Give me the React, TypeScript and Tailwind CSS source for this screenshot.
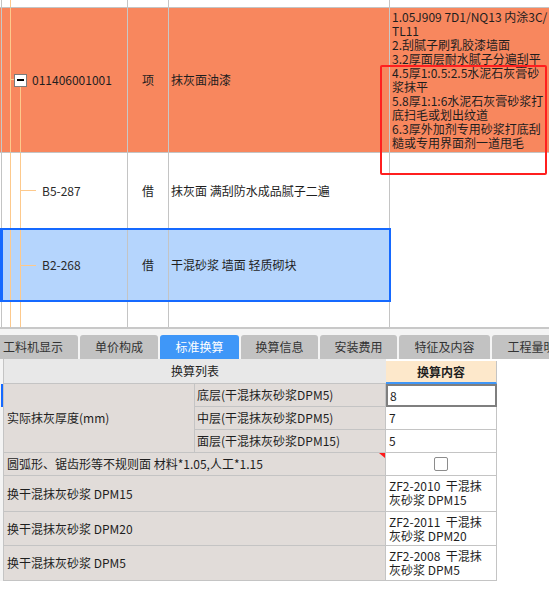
import React from 'react';

const descLines = [
  '1.05J909 7D1/NQ13 内涂3C/',
  'TL11',
  '2.刮腻子刷乳胶漆墙面',
  '3.2厚面层耐水腻子分遍刮平',
  '4.5厚1:0.5:2.5水泥石灰膏砂',
  '浆抹平',
  '5.8厚1:1:6水泥石灰膏砂浆打',
  '底扫毛或划出纹道',
  '6.3厚外加剂专用砂浆打底刮',
  '糙或专用界面剂一道甩毛',
];

const tabs = [
  { label: '工料机显示', w: 'w-[90px]' },
  { label: '单价构成', w: 'w-[78px]' },
  { label: '标准换算', w: 'w-[79px]', active: true },
  { label: '换算信息', w: 'w-[77px]' },
  { label: '安装费用', w: 'w-[77px]' },
  { label: '特征及内容', w: 'w-[91px]' },
  { label: '工程量明细', w: 'w-[91px]' },
];

const layers = [
  { label: '底层(干混抹灰砂浆DPM5)', value: '8' },
  { label: '中层(干混抹灰砂浆DPM5)', value: '7' },
  { label: '面层(干混抹灰砂浆DPM15)', value: '5' },
];

const swaps = [
  { label: '换干混抹灰砂浆 DPM15', code: 'ZF2-2010\u00a0\u00a0干混抹', name: '灰砂浆 DPM15', h: 'h-[36px]' },
  { label: '换干混抹灰砂浆 DPM20', code: 'ZF2-2011\u00a0\u00a0干混抹', name: '灰砂浆 DPM20', h: 'h-[34px]' },
  { label: '换干混抹灰砂浆 DPM5', code: 'ZF2-2008\u00a0\u00a0干混抹', name: '灰砂浆 DPM5', h: 'h-[35px]' },
];

function TreeLines({ offset, from = 0, branchY }: { offset: number; from?: number; branchY?: string }) {
  // offset: 8 for normal cells (border-l 1px at x=1), 7 inside the blue row
  const a = offset === 8 ? 'left-[8px]' : 'left-[7px]';
  const b = offset === 8 ? 'left-[18px]' : 'left-[17px]';
  return (
    <>
      <div className={`absolute top-0 bottom-0 w-px bg-[#fdc98c] ${a}`} />
      <div className={`absolute bottom-0 w-px bg-[#fdc98c] ${b}`} style={{ top: from }} />
      {branchY && <div className={`absolute h-px w-[16px] bg-[#fdc98c] ${b} ${branchY}`} />}
    </>
  );
}

export default function App() {
  return (
    <div className="relative w-[549px] h-[599px] overflow-hidden bg-white text-[12px] leading-[14px] text-[#1e1e1e] font-['Noto_Sans_CJK_SC','Liberation_Sans',sans-serif]">
      {/* top grid */}
      <div className="h-[327px] flex flex-col">
        {/* sliver of previous row */}
        <div className="flex h-[8px] border-b border-[#c4c4c4]">
          <div className="relative ml-px w-[127px] border-x border-[#c4c4c4]">
            <div className="absolute top-0 bottom-0 left-[8px] w-px bg-[#fdc98c]" />
          </div>
          <div className="w-[41px] border-r border-[#c4c4c4]" />
          <div className="w-[221px] border-r border-[#c4c4c4]" />
          <div className="flex-1" />
        </div>

        {/* row 1 - orange */}
        <div className="flex h-[145px] border-b border-[#c4c4c4] bg-[#f8875e]">
          <div className="relative ml-px w-[127px] border-x border-[#c8c8c8] flex items-center pl-[12px]">
            <div className="absolute top-0 bottom-0 left-[8px] w-px bg-[#fdc98c]" />
            <div className="absolute top-[71px] bottom-0 left-[18px] w-px bg-[#fdc98c]" />
            <div className="absolute top-[71px] h-px left-[8px] w-[4px] bg-[#fdc98c]" />
            <div className="relative z-10 w-[13px] h-[13px] border border-[#7a7a7a] bg-white flex items-center justify-center">
              <div className="w-[7px] h-[2px] bg-black" />
            </div>
            <span className="ml-[5px]">011406001001</span>
          </div>
          <div className="w-[41px] border-r border-[#c8c8c8] flex items-center justify-center">项</div>
          <div className="w-[221px] border-r border-[#c8c8c8] flex items-center pl-[2px]">抹灰面油漆</div>
          <div className="flex-1 pl-[2px] pt-[2px]">
            {descLines.map((l) => (
              <div key={l} className="whitespace-nowrap">{l}</div>
            ))}
          </div>
        </div>

        {/* row 2 */}
        <div className="flex h-[75px]">
          <div className="relative ml-px w-[127px] border-x border-[#c4c4c4] flex items-center pl-[40px]">
            <TreeLines offset={8} branchY="top-[37px]" />
            <span className="text-[#2a2a2a]">B5-287</span>
          </div>
          <div className="w-[41px] border-r border-[#c4c4c4] flex items-center justify-center">借</div>
          <div className="w-[221px] border-r border-[#c4c4c4] flex items-center pl-[2px] whitespace-nowrap">抹灰面 满刮防水成品腻子二遍</div>
          <div className="flex-1" />
        </div>

        {/* row 3 - selected */}
        <div className="flex h-[74px]">
          <div className="flex w-[391px] border-y-2 border-r-2 border-l-[3px] border-[#1569ff] bg-[#b5d5fd]">
            <div className="relative w-[125px] border-r border-[#c4c4c4] flex items-center pl-[39px]">
              <TreeLines offset={7} branchY="top-[35px]" />
              <span className="text-[#2a2a2a]">B2-268</span>
            </div>
            <div className="w-[41px] border-r border-[#c4c4c4] flex items-center justify-center">借</div>
            <div className="flex-1 flex items-center pl-[2px] whitespace-nowrap">干混砂浆 墙面 轻质砌块</div>
          </div>
          <div className="flex-1" />
        </div>

        {/* filler */}
        <div className="flex flex-1">
          <div className="relative ml-px w-[127px] border-x border-[#c4c4c4]">
            <TreeLines offset={8} />
          </div>
          <div className="w-[41px] border-r border-[#c4c4c4]" />
          <div className="w-[221px] border-r border-[#c4c4c4]" />
          <div className="flex-1" />
        </div>
      </div>

      <div className="h-[2px] bg-[#c8c8c8]" />

      {/* tabs */}
      <div className="h-[30px] bg-[#f4f4f4] pt-[6px] flex gap-[2px] ml-[-12px] overflow-hidden">
        {tabs.map((t) => (
          <div
            key={t.label}
            className={`${t.w} shrink-0 h-[24px] rounded-t-[3px] flex items-center justify-center whitespace-nowrap ${
              t.active ? 'bg-[#3f97f8] text-white' : 'bg-[#c2c2c2] text-[#333]'
            }`}
          >
            {t.label}
          </div>
        ))}
      </div>

      {/* bottom table */}
      <div className="flex">
        <div className="w-[4px] border-r border-[#c4c4c4] bg-[#f4f4f4] flex flex-col h-[222px]">
          <div className="h-[25px]" />
          <div className="h-[23px] w-[2px] ml-[1px] bg-[#1569ff]" />
        </div>

        <div className="flex flex-col">
          {/* header */}
          <div className="flex h-[25px]">
            <div className="w-[382px] bg-[#e8e8e8] border-b border-[#c4c4c4] flex items-center justify-center">换算列表</div>
            <div className="w-[111px] mt-[2px] bg-[#fde8cb] border-r border-[#c4c4c4] border-b-2 border-b-[#3f97f8] flex items-center justify-center font-bold">
              换算内容
            </div>
          </div>

          {/* thickness block */}
          <div className="flex h-[69px]">
            <div className="w-[191px] bg-[#e1dcd9] border-r border-b border-[#c4c4c4] flex items-center pl-[3px]">实际抹灰厚度(mm)</div>
            <div className="w-[191px] flex flex-col">
              {layers.map((l) => (
                <div key={l.label} className="h-[23px] bg-[#e1dcd9] border-r border-b border-[#c4c4c4] flex items-center pl-[2px] whitespace-nowrap">
                  {l.label}
                </div>
              ))}
            </div>
            <div className="w-[111px] flex flex-col">
              {layers.map((l, i) => (
                <div
                  key={l.label}
                  className={`h-[23px] flex items-center pl-[2px] bg-white ${
                    i === 0 ? 'border-2 border-[#7f7f7f]' : 'border-r border-b border-[#c4c4c4] pl-[3px]'
                  }`}
                >
                  {l.value}
                </div>
              ))}
            </div>
          </div>

          {/* irregular surface */}
          <div className="flex h-[23px]">
            <div className="relative w-[382px] bg-[#e1dcd9] border-r border-b border-[#c4c4c4] flex items-center pl-[3px] whitespace-nowrap">
              圆弧形、锯齿形等不规则面 材料*1.05,人工*1.15
              <div className="absolute top-0 right-0 w-0 h-0 border-t-[5px] border-t-[#ff1a1a] border-l-[6px] border-l-transparent" />
            </div>
            <div className="w-[111px] bg-white border-r border-b border-[#c4c4c4] flex items-center justify-center">
              <div className="w-[14px] h-[14px] rounded-[2px] border border-[#8c8c8c] bg-white" />
            </div>
          </div>

          {swaps.map((s) => (
            <div key={s.label} className={`flex ${s.h}`}>
              <div className="w-[382px] bg-[#e1dcd9] border-r border-b border-[#c4c4c4] flex items-center pl-[3px] whitespace-nowrap">{s.label}</div>
              <div className="w-[111px] bg-white border-r border-b border-[#c4c4c4] pl-[3px] pt-[3px] whitespace-nowrap">
                <div>{s.code}</div>
                <div>{s.name}</div>
              </div>
            </div>
          ))}
        </div>
      </div>

      {/* red annotation box */}
      <div className="absolute left-[380px] top-[65px] w-[167px] h-[110px] border-2 border-[#ff1f1f] rounded-[2px] pointer-events-none" />
    </div>
  );
}
